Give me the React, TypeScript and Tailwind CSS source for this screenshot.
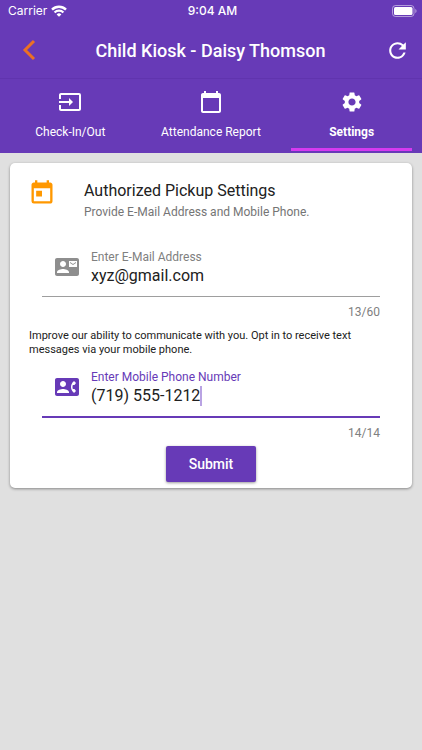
import { useState } from "react";
import {
  MdCalendarToday,
  MdContactMail,
  MdContactPhone,
  MdInput,
  MdRefresh,
  MdSettings,
  MdToday,
} from "react-icons/md";

const tabs = [
  { id: "check", label: "Check-In/Out", icon: MdInput },
  { id: "attendance", label: "Attendance Report", icon: MdCalendarToday },
  { id: "settings", label: "Settings", icon: MdSettings },
];

function StatusBar() {
  return (
    <div className="grid h-[22px] grid-cols-3 items-center pl-2 pr-[5px] font-['Inter',sans-serif] text-[12px]">
      <div className="flex items-center gap-1">
        <span>Carrier</span>
        <svg viewBox="0 0 16 12" className="h-3 w-4" fill="none" stroke="currentColor" strokeWidth="2.4">
          <path d="M1 4.6a10 10 0 0 1 14 0" />
          <path d="M3.6 7.5a6.2 6.2 0 0 1 8.8 0" />
          <path d="M8 11.8 5.6 9.4a3.4 3.4 0 0 1 4.8 0z" fill="currentColor" stroke="none" />
        </svg>
      </div>
      <div className="text-center font-medium">9:04 AM</div>
      <svg viewBox="0 0 25 12" className="h-3 w-[25px] justify-self-end">
        <rect x="0.5" y="0.5" width="21.5" height="11" rx="3" fill="none" stroke="white" strokeOpacity="0.5" />
        <rect x="2" y="2" width="18.5" height="8" rx="1.5" fill="white" />
        <path d="M23.3 4v4c.8-.3 1.2-1.1 1.2-2s-.4-1.7-1.2-2z" fill="white" fillOpacity="0.5" />
      </svg>
    </div>
  );
}

export default function App() {
  const [active, setActive] = useState("settings");
  const [email, setEmail] = useState("xyz@gmail.com");
  const [phone, setPhone] = useState("(719) 555-1212");

  return (
    <div className="min-h-screen bg-[#e0e0e0] font-['Roboto','Liberation_Sans',sans-serif] text-[#212121]">
      <header className="bg-[#673ab7] text-white">
        <StatusBar />
        <div className="flex h-14 items-center justify-between pl-[22px] pr-3">
          <button type="button" aria-label="Back" className="text-[#ec7023]">
            <svg viewBox="0 0 14 22" className="h-[22px] w-[14px]" fill="none" stroke="currentColor" strokeWidth="3">
              <path d="M12 2 3 11l9 9" />
            </svg>
          </button>
          <h1 className="text-[18px] font-medium">Child Kiosk - Daisy Thomson</h1>
          <button type="button" aria-label="Refresh">
            <MdRefresh className="size-[25px]" />
          </button>
        </div>
        <nav className="grid grid-cols-3 border-t border-[#6034ae]">
          {tabs.map((tab) => (
            <button
              key={tab.id}
              type="button"
              onClick={() => setActive(tab.id)}
              className="flex flex-col items-center px-[10px] pb-[2px] pt-[11px] text-[12px]"
            >
              <tab.icon className="size-6" />
              <span className={`mt-2 leading-5 whitespace-nowrap ${active === tab.id ? "font-bold" : ""}`}>
                {tab.label}
              </span>
              <span className={`mt-[6px] h-[3px] w-full ${active === tab.id ? "bg-[#d63af0]" : ""}`} />
            </button>
          ))}
        </nav>
      </header>

      <main className="p-[10px]">
        <form
          onSubmit={(e) => e.preventDefault()}
          className="rounded-[5px] bg-white px-[18px] pb-[6px] pt-4 shadow-[0_1px_3px_rgba(0,0,0,0.4)]"
        >
          <div className="flex gap-7">
            <MdToday className="size-7 text-[#ff9800]" />
            <div>
              <h2 className="text-[16px] leading-6">Authorized Pickup Settings</h2>
              <p className="text-[12px] leading-[18px] text-[#757575]">Provide E-Mail Address and Mobile Phone.</p>
            </div>
          </div>

          <div className="mx-[14px] mt-[27px]">
            <div className="flex items-center gap-3 border-b border-[#9e9e9e] pb-[10px] pl-[13px]">
              <MdContactMail className="size-6 text-[#8e8e8e]" />
              <div className="flex-1">
                <label htmlFor="email" className="block text-[12px] leading-[18px] text-[#808080]">
                  Enter E-Mail Address
                </label>
                <input
                  id="email"
                  type="email"
                  maxLength={60}
                  value={email}
                  onChange={(e) => setEmail(e.target.value)}
                  className="block h-5 w-full bg-transparent text-[16px] outline-none"
                />
              </div>
            </div>
            <p className="mt-[6px] text-right text-[12px] leading-[18px] text-[#808080]">{email.length}/60</p>
          </div>

          <p className="mt-2 pl-px text-[11px] leading-[14px]">
            Improve our ability to communicate with you. Opt in to receive text messages via your mobile phone.
          </p>

          <div className="mx-[14px] mt-[11px]">
            <div className="flex items-center gap-3 border-b-2 border-[#673ab7] pb-[10px] pl-[13px]">
              <MdContactPhone className="size-6 text-[#673ab7]" />
              <div className="flex-1">
                <label htmlFor="phone" className="block text-[12px] leading-[18px] text-[#673ab7]">
                  Enter Mobile Phone Number
                </label>
                <div className="flex h-5 items-center">
                  <input
                    id="phone"
                    type="tel"
                    maxLength={14}
                    value={phone}
                    onChange={(e) => setPhone(e.target.value)}
                    className="field-sizing-content bg-transparent text-[16px] outline-none"
                  />
                  <span className="h-5 w-[2px] bg-[#b9a3e3]" />
                </div>
              </div>
            </div>
            <p className="mt-[6px] text-right text-[12px] leading-[18px] text-[#808080]">{phone.length}/14</p>
          </div>

          <button
            type="submit"
            className="mx-auto mt-1 block rounded-[2px] bg-[#673ab7] px-[23px] py-2 text-[14px] leading-5 font-medium text-white shadow-[0_1px_3px_rgba(0,0,0,0.4)]"
          >
            Submit
          </button>
        </form>
      </main>
    </div>
  );
}
